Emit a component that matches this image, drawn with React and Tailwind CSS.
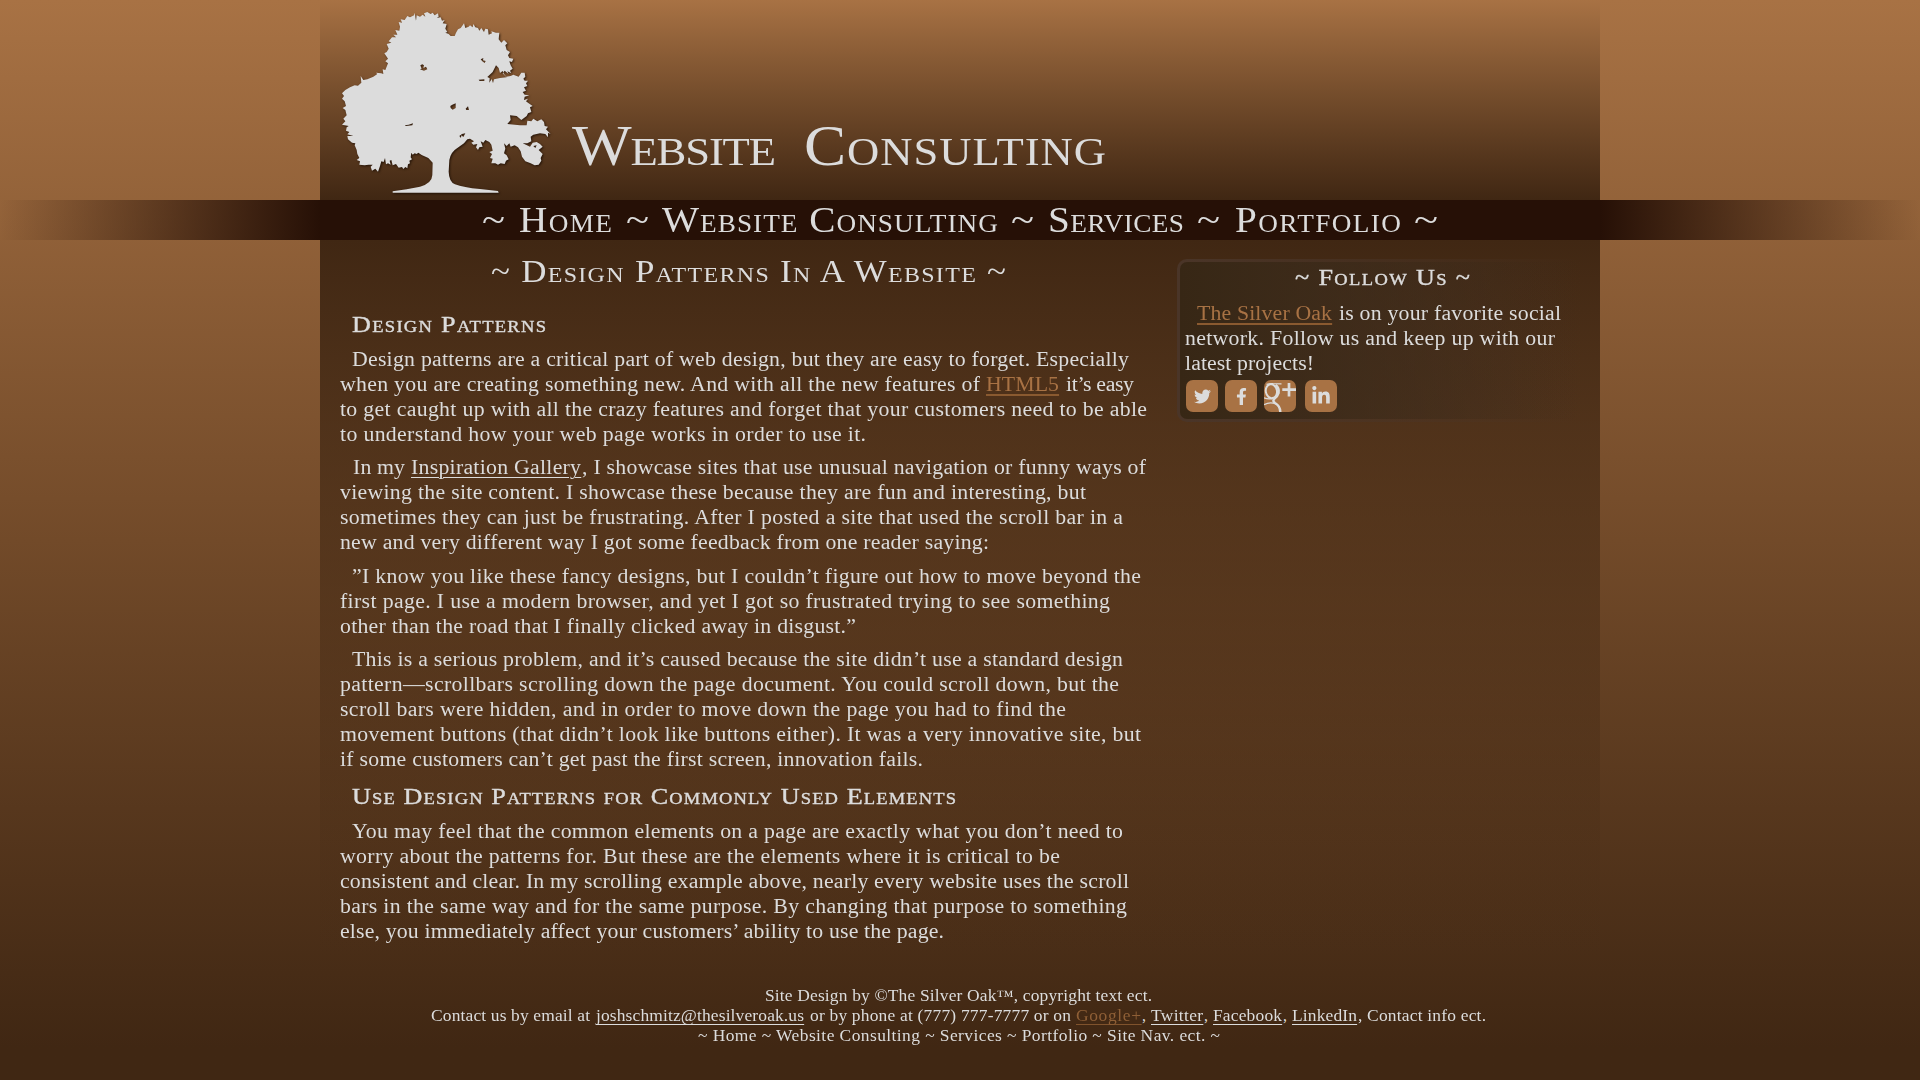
import { useLayoutEffect, useRef } from "react";
import { FaTwitter, FaFacebookF, FaLinkedinIn } from "react-icons/fa";

const LINK = "text-[#a87244] underline decoration-[#8a5a30] decoration-2 underline-offset-[3px]";
const PLAIN = "underline decoration-1 underline-offset-[3px]";
const STRETCH = 1.09;

/* Fits a run of text to a given measure with slightly extended letters. */
function Run({ width, gap = 0, className = "", children }) {
  const ref = useRef(null);
  useLayoutEffect(() => {
    const el = ref.current;
    el.style.letterSpacing = "0px";
    el.style.transform = "none";
    const natural = el.getBoundingClientRect().width;
    if (children.length < 3) {
      el.style.transform = children === "~" ? `scaleX(${width / natural})` : "none";
      return;
    }
    el.style.letterSpacing = `${(width / STRETCH - natural) / (children.length - 1)}px`;
    el.style.transform = `scaleX(${STRETCH})`;
  }, [width, children]);
  return (
    <span className="block shrink-0 whitespace-pre" style={{ width, marginLeft: gap }}>
      <span ref={ref} className={"inline-block origin-left align-top " + className}>{children}</span>
    </span>
  );
}

/* One line of copy: runs are [start, end, text, className], measured from the line's origin. */
function Line({ origin = 0, runs }) {
  let pos = origin;
  return (
    <span className="flex">
      {runs.map(([a, b, text, cls], i) => {
        const gap = a - pos;
        pos = b;
        return <Run key={i} width={b - a} gap={gap} className={cls}>{text}</Run>;
      })}
    </span>
  );
}

function Para({ origin, lines, className = "" }) {
  return (
    <p className={"text-[20px] leading-[25px] " + className}>
      {lines.map((runs, i) => <Line key={i} origin={origin} runs={runs} />)}
    </p>
  );
}

const P1 = [
  [[352, 1129, "Design patterns are a critical part of web design, but they are easy to forget. Especially"]],
  [[340, 980, "when you are creating something new. And with all the new features of"], [986, 1059, "HTML5", LINK], [1066, 1134, "it’s easy"]],
  [[340, 1147, "to get caught up with all the crazy features and forget that your customers need to be able"]],
  [[340, 866, "to understand how your web page works in order to use it."]],
];
const P2 = [
  [[353, 405, "In my"], [411, 581, "Inspiration Gallery", PLAIN], [582, 1146, ", I showcase sites that use unusual navigation or funny ways of"]],
  [[340, 1086, "viewing the site content. I showcase these because they are fun and interesting, but"]],
  [[340, 1123, "sometimes they can just be frustrating. After I posted a site that used the scroll bar in a"]],
  [[340, 989, "new and very different way I got some feedback from one reader saying:"]],
];
const P3 = [
  [[352, 1141, "”I know you like these fancy designs, but I couldn’t figure out how to move beyond the"]],
  [[340, 1110, "first page. I use a modern browser, and yet I got so frustrated trying to see something"]],
  [[340, 856, "other than the road that I finally clicked away in disgust.”"]],
];
const P4 = [
  [[352, 1123, "This is a serious problem, and it’s caused because the site didn’t use a standard design"]],
  [[340, 1119, "pattern—scrollbars scrolling down the page document. You could scroll down, but the"]],
  [[340, 1066, "scroll bars were hidden, and in order to move down the page you had to find the"]],
  [[340, 1141, "movement buttons (that didn’t look like buttons either). It was a very innovative site, but"]],
  [[340, 923, "if some customers can’t get past the first screen, innovation fails."]],
];
const P5 = [
  [[352, 1123, "You may feel that the common elements on a page are exactly what you don’t need to"]],
  [[340, 1060, "worry about the patterns for. But these are the elements where it is critical to be"]],
  [[340, 1129, "consistent and clear. In my scrolling example above, nearly every website uses the scroll"]],
  [[340, 1127, "bars in the same way and for the same purpose. By changing that purpose to something"]],
  [[340, 944, "else, you immediately affect your customers’ ability to use the page."]],
];
const NAV = [
  [482, 505, "~"], [519, 612, "Home"], [626, 649, "~"], [662, 998, "Website Consulting"], [1011, 1034, "~"],
  [1048, 1184, "Services"], [1197, 1220, "~"], [1235, 1401, "Portfolio"], [1414, 1438, "~"],
];
const FOLLOW = [
  [[1197, 1332, "The Silver Oak", LINK], [1339, 1561, "is on your favorite social"]],
  [[1185, 1555, "network. Follow us and keep up with our"]],
  [[1185, 1314, "latest projects!"]],
];
const FOOTER = [
  [[765, 1152, "Site Design by ©The Silver Oak™, copyright text ect."]],
  [
    [431, 590, "Contact us by email at"], [596, 804, "joshschmitz@thesilveroak.us", PLAIN],
    [810, 1071, "or by phone at (777) 777-7777 or on"],
    [1076, 1141, "Google+", "text-[#8f5f36] underline decoration-[#80532d] decoration-1 underline-offset-[3px]"], [1142, 1146, ","],
    [1151, 1203, "Twitter", PLAIN], [1204, 1208, ","], [1213, 1282, "Facebook", PLAIN], [1283, 1287, ","],
    [1292, 1357, "LinkedIn", PLAIN], [1358, 1486, ", Contact info ect."],
  ],
  [[698, 1220, "~ Home ~ Website Consulting ~ Services ~ Portfolio ~ Site Nav. ect. ~"]],
];

function Oak() {
  return (
    <svg viewBox="0 0 780 600" className="h-[200px] w-[260px] shrink-0 drop-shadow-[1px_1px_1px_rgba(20,8,0,0.75)]">
      <path
        fill="#dcdcdc"
        fillRule="evenodd"
        d="M218 574L260 568L300 560Q336 550 337 525L338 488L325 474L305 465L295 458L290 462L284 460L278 464L274 458L272 472L276 478L268 482L270 490L264 493L262 505L256 501L250 507L246 501L236 503L228 492L218 496L214 480L209 482L212 494L204 490L198 493L195 474L191 486L184 484L180 498L174 515L166 506L156 512L152 500L158 494L146 494L134 496L118 494L120 484L110 480L118 474L112 462L110 450L104 436L106 430L96 428L84 418L82 408L100 408L82 403L88 396L78 392L80 382L86 378L66 374L76 364L70 356L80 346L76 330L68 324L78 318L74 304L66 296L72 288L66 280L76 270L90 262L104 256L114 257L124 248L122 228L130 240L142 238L160 230L172 222L168 218L184 220L190 222L188 208L196 210L204 190L196 184L204 176L193 160L200 156L206 146L200 132L214 128L206 124L216 112L228 112L220 104L232 104L226 90L238 92L240 80L236 66L246 68L242 58L254 60L262 48L270 52L282 46L284 38L288 62L290 46L300 50L308 44L316 50L312 40L322 36L332 42L338 38L344 46L354 40L356 50L350 54L362 52L366 62L374 60L368 70L380 72L376 86L382 96L376 98L386 102L392 108L404 108L408 98L414 88L422 84L428 76L432 70L436 84L446 80L450 76L458 82L460 72L466 82L474 84L478 92L484 84L492 96L496 86L504 88L506 104L516 100L514 94L528 98L538 98L536 118L544 128L552 120L562 130L556 136L560 150L570 156L564 166L568 174L580 176L576 186L568 184L572 196L578 206L570 212L574 220L562 214L566 222L554 212L548 220L558 230L572 228L580 224L596 230L604 218L614 218L616 230L610 236L614 242L624 242L618 250L622 258L612 262L618 272L608 276L614 284L628 286L614 290L612 300L624 296L618 304L626 310L638 318L630 322L634 336L624 340L620 348L604 360L590 348L570 346L572 360L562 372L600 376L620 376L622 362L634 364L640 356L652 364L664 358L672 366L674 378L684 380L678 388L692 402L684 398L684 412L676 402L660 400L640 404L632 410L634 424L622 430L608 430L618 434L630 440L638 428L650 426L660 432L668 440L656 450L668 462L662 474L664 482L656 494L644 496L632 490L616 484L606 470L602 454L594 442L584 436L572 440L568 430L560 438L552 430L556 446L552 460L560 466L566 478L558 482L554 492L542 490L534 494L526 490L514 490L518 476L510 474L516 462L508 456L518 452L514 434L508 426L496 420L490 428L482 424L488 440L478 442L474 450L468 442L472 432L460 434L454 428L462 424L450 416L442 418L432 430L412 444Q392 456 388 480L386 515Q387 545 405 553Q430 563 480 567L534 573L536 578L218 578Z
        M502 231L518 216L528 196L536 204L540 219L548 213L552 222L560 232L540 234L522 238L519 249L515 237L508 248L509 235Z
        M301 196L305 206L300 208L312 212L322 208L318 200L310 204L312 196L307 193Z
        M482 178L490 174L489 181L497 183L494 189L487 184Z
        M476 239L493 238L493 243L479 243Z
        M391 318L397 314L407 310L407 324L398 329L392 324Z
        M437 326L444 319L447 330L439 330Z
        M254 376L266 374L279 370L277 376L258 378Z
        M418 408L426 402L436 400L430 411L424 406L423 414Z
        M640 438L650 436L646 444Z"
      />
    </svg>
  );
}

function GooglePlus() {
  return (
    <svg viewBox="0 0 32 32" className="size-8" fill="none" stroke="#dcdcdc">
      <ellipse cx="7.4" cy="11.2" rx="5.6" ry="7" strokeWidth="2" transform="rotate(-10 7.4 11.2)" />
      <path d="M2.500 4.400Q6 3.500 9 3.700L17.500 3.900" strokeWidth="1.3" />
      <path d="M11.500 5Q15.500 8 14.600 13Q13.800 16 10.500 18.500Q8 21 11 23Q16.300 26 16.300 32" strokeWidth="2.5" />
      <path d="M0 17.800Q4 19.500 8 18.600M0 24.600Q6 21.500 12 24" strokeWidth="1.2" />
      <path d="M25 3v13.500M18.300 9.600H32" strokeWidth="2.700" />
    </svg>
  );
}

function Tile({ className = "", children }) {
  return (
    <a className={"flex size-8 items-center justify-center overflow-hidden rounded-[7px] bg-[#a87244] text-[#dcdcdc] " + className}>
      {children}
    </a>
  );
}

export default function App() {
  return (
    <div className="h-[1080px] w-[1920px] overflow-hidden bg-linear-to-b from-[#a87244] via-[#724a29] to-[#402713] to-97% font-['Liberation_Serif',serif] text-[#dcdcdc]">
      <header className="mx-auto flex h-[200px] w-[1280px] bg-linear-to-b from-[#a87244] to-[#402713]">
        <Oak />
        <h1 className="pt-[113px] text-[58px] leading-[66px] [font-variant:small-caps]">
          <Line origin={580} runs={[[572, 776, "Website"], [804, 1106, "Consulting"]]} />
        </h1>
      </header>

      <nav className="flex h-10 bg-[linear-gradient(90deg,transparent,#261006_320px,#261006_1600px,transparent)] text-[36px] leading-10 [font-variant:small-caps]">
        <Line runs={NAV} />
      </nav>

      <div className="mx-auto flex h-[720px] w-[1280px] bg-linear-to-b from-[#402713] to-[#40271300]">
        <main className="w-[857px] shrink-0 pl-5">
          <h2 className="h-[68px] pt-[11px] text-[32px] leading-10 [font-variant:small-caps]">
            <Line origin={340} runs={[[491, 1006, "~ Design Patterns In A Website ~"]]} />
          </h2>
          <h3 className="h-[39px] text-[24px] leading-8 [-webkit-text-stroke:0.4px_#dcdcdc] [font-variant:small-caps]">
            <Line origin={340} runs={[[352, 546, "Design Patterns"]]} />
          </h3>
          <Para origin={340} lines={P1} />
          <Para origin={340} lines={P2} className="mt-2" />
          <Para origin={340} lines={P3} className="mt-[9px]" />
          <Para origin={340} lines={P4} className="mt-2" />
          <h3 className="h-[47px] pt-2 text-[24px] leading-8 [-webkit-text-stroke:0.4px_#dcdcdc] [font-variant:small-caps]">
            <Line origin={340} runs={[[352, 956, "Use Design Patterns for Commonly Used Elements"]]} />
          </h3>
          <Para origin={340} lines={P5} />
        </main>

        <aside className="mt-[19px] h-[163px] w-[406px] rounded-[10px] bg-[linear-gradient(90deg,#4a3528,transparent)] p-[3px]">
          <div className="h-full rounded-[7px] bg-[linear-gradient(90deg,#372715,#40271300)] pl-[5px]">
            <h3 className="h-[39px] text-[24px] leading-[31px] [-webkit-text-stroke:0.4px_#dcdcdc] [font-variant:small-caps]">
              <Line origin={1185} runs={[[1295, 1470, "~ Follow Us ~"]]} />
            </h3>
            <Para origin={1185} lines={FOLLOW} />
            <div className="mt-1 flex pl-px">
              <Tile><FaTwitter className="size-[17px]" /></Tile>
              <Tile className="ml-[7px]"><FaFacebookF className="size-[17px]" /></Tile>
              <Tile className="ml-[7px]"><GooglePlus /></Tile>
              <Tile className="ml-[9px]"><FaLinkedinIn className="size-[20px]" /></Tile>
            </div>
          </div>
        </aside>
      </div>

      <footer className="pt-[26px] text-[16px] leading-5">
        {FOOTER.map((runs, i) => <Line key={i} runs={runs} />)}
      </footer>
    </div>
  );
}
